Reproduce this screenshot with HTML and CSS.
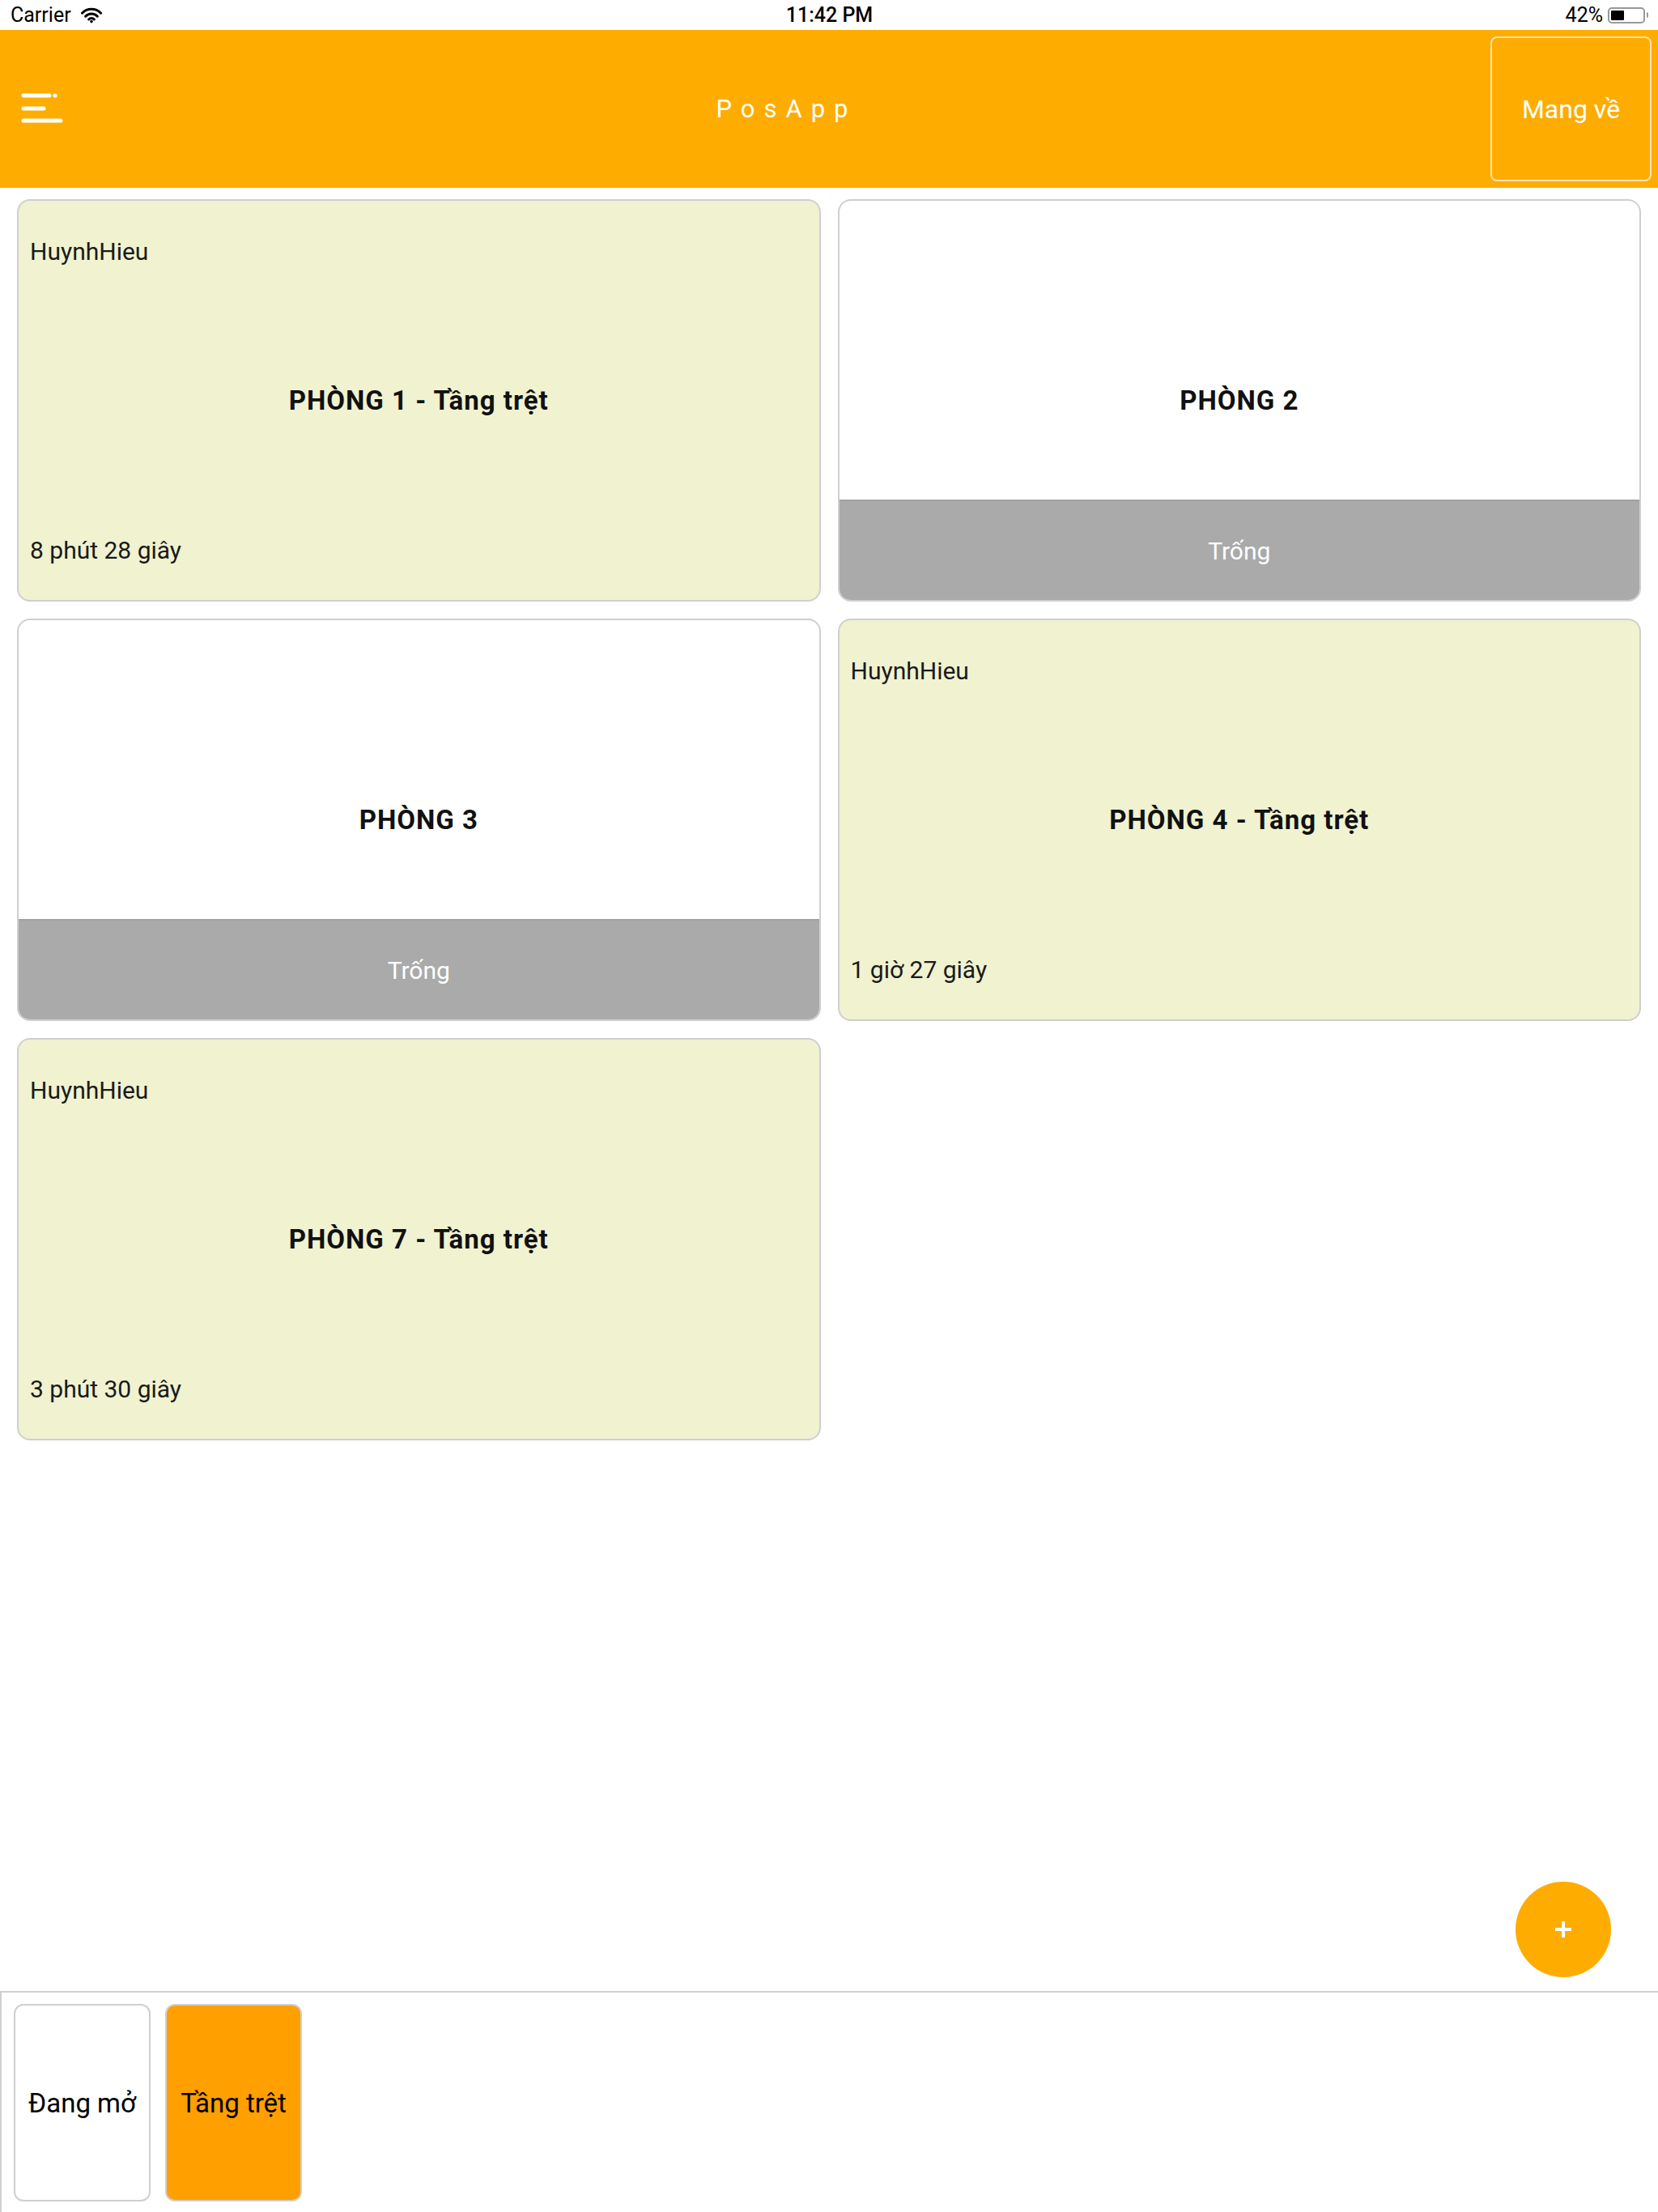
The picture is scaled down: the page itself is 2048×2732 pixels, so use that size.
FILE: index.html
```html
<!DOCTYPE html>
<html lang="vi">

<head>
    <meta charset="UTF-8">
    <meta name="viewport" content="width=device-width, initial-scale=1.0">
    <title>PosApp</title>
    <link rel="stylesheet" href="styles.css">
</head>

<body>

    <!-- Status Bar -->
    <div class="status-bar">
        <div class="status-left">
            <span>Carrier</span>
            <svg class="wifi" viewBox="0 0 26 20" width="26" height="20">
                <path d="M1.5 7.2 A16 16 0 0 1 24.5 7.2" fill="none" stroke="#000" stroke-width="3" stroke-linecap="round" />
                <path d="M5.6 11.2 A10.2 10.2 0 0 1 20.4 11.2" fill="none" stroke="#000" stroke-width="3" stroke-linecap="round" />
                <path d="M9.6 15 A4.6 4.6 0 0 1 16.4 15" fill="none" stroke="#000" stroke-width="3" stroke-linecap="round" />
                <circle cx="13" cy="17.6" r="1.8" fill="#000" />
            </svg>
        </div>
        <div class="status-time">11:42 PM</div>
        <div class="status-right">
            <span>42%</span>
            <div class="battery">
                <div class="battery-level"></div>
            </div>
            <div class="battery-nub"></div>
        </div>
    </div>

    <!-- Header -->
    <header>
        <div class="menu-icon">
            <svg viewBox="0 0 52 40" width="52" height="40">
                <line x1="3" y1="6" x2="35" y2="6" stroke="#fff" stroke-width="5" stroke-linecap="round" />
                <circle cx="42" cy="6" r="2.6" fill="#fff" />
                <line x1="3" y1="22" x2="28" y2="22" stroke="#fff" stroke-width="5" stroke-linecap="round" />
                <line x1="3" y1="37" x2="49" y2="37" stroke="#fff" stroke-width="5" stroke-linecap="round" />
            </svg>
        </div>
        <h1>PosApp</h1>
        <button class="takeaway-btn">Mang về</button>
    </header>

    <!-- Room Grid -->
    <main class="room-grid">
        <div class="room busy">
            <div class="room-top">HuynhHieu</div>
            <div class="room-name">PHÒNG 1 - Tầng trệt</div>
            <div class="room-bottom">8 phút 28 giây</div>
        </div>
        <div class="room">
            <div class="room-top"></div>
            <div class="room-name">PHÒNG 2</div>
            <div class="room-bottom empty">Trống</div>
        </div>
        <div class="room">
            <div class="room-top"></div>
            <div class="room-name">PHÒNG 3</div>
            <div class="room-bottom empty">Trống</div>
        </div>
        <div class="room busy">
            <div class="room-top">HuynhHieu</div>
            <div class="room-name">PHÒNG 4 - Tầng trệt</div>
            <div class="room-bottom">1 giờ 27 giây</div>
        </div>
        <div class="room busy">
            <div class="room-top">HuynhHieu</div>
            <div class="room-name">PHÒNG 7 - Tầng trệt</div>
            <div class="room-bottom">3 phút 30 giây</div>
        </div>
    </main>

    <!-- Add Button -->
    <button class="fab">
        <svg viewBox="0 0 24 24" width="24" height="24">
            <line x1="12" y1="2" x2="12" y2="22" stroke="#fff" stroke-width="4" />
            <line x1="2" y1="12" x2="22" y2="12" stroke="#fff" stroke-width="4" />
        </svg>
    </button>

    <!-- Floor Tabs -->
    <nav class="floor-tabs">
        <a href="javascript:void(0)" class="tab">Đang mở</a>
        <a href="javascript:void(0)" class="tab active">Tầng trệt</a>
    </nav>

</body>

</html>
```

FILE: styles.css
```css
/* Basic layout */
body {
    font-family: Roboto, "Liberation Sans", sans-serif;
    background-color: #fff;
    margin: 0;
    padding: 0;
    display: flex;
    flex-direction: column;
    height: 100vh;
    position: relative;
}

/* Status Bar */
.status-bar {
    height: 37px;
    display: flex;
    align-items: center;
    justify-content: space-between;
    padding: 0 12px 0 13px;
    font-size: 25px;
    color: #000;
    flex-shrink: 0;
}

.status-left {
    display: flex;
    align-items: center;
    gap: 12px;
    width: 300px;
}

.status-time {
    font-weight: 500;
    font-size: 25px;
}

.status-right {
    display: flex;
    align-items: center;
    justify-content: flex-end;
    width: 300px;
}

.status-right span {
    margin-right: 6px;
}

.battery {
    width: 46px;
    height: 20px;
    box-sizing: border-box;
    border: 2px solid #999;
    border-radius: 5px;
    padding: 2px;
}

.battery-level {
    width: 42%;
    height: 100%;
    background-color: #000;
    border-radius: 1px;
}

.battery-nub {
    width: 2px;
    height: 7px;
    background-color: #999;
    margin-left: 2px;
    border-radius: 0 2px 2px 0;
}

/* Header */
header {
    background-color: #ffac00;
    height: 195px;
    display: flex;
    align-items: center;
    padding: 0 8px 0 26px;
    flex-shrink: 0;
}

.menu-icon {
    width: 76px;
    display: flex;
    align-items: center;
}

.menu-icon svg {
    display: block;
    margin-top: -6px;
}

header h1 {
    flex: 1;
    margin: 0;
    text-align: center;
    color: #fff;
    font-size: 31px;
    font-weight: 400;
    letter-spacing: 11px;
}

.takeaway-btn {
    width: 199px;
    height: 179px;
    background: transparent;
    border: 2px solid #ffe2b0;
    border-radius: 8px;
    color: #fff;
    font-family: Roboto, "Liberation Sans", sans-serif;
    font-size: 32px;
    cursor: pointer;
}

/* Room Grid */
.room-grid {
    flex: 1;
    display: grid;
    grid-template-columns: 1fr 1fr;
    grid-auto-rows: 497px;
    align-content: start;
    gap: 21px;
    padding: 14px 21px 0 21px;
}

.room {
    display: grid;
    grid-template-rows: 124px 1fr 124px;
    border: 2px solid #cfcfcf;
    border-radius: 16px;
    background-color: #fff;
    overflow: hidden;
    box-sizing: border-box;
}

.room.busy {
    background-color: #f0f2d0;
}

.room-top,
.room-bottom {
    display: flex;
    align-items: center;
    padding: 0 14px;
    font-size: 30px;
    color: #1a1a1a;
}

.room-name {
    display: flex;
    align-items: center;
    justify-content: center;
    font-size: 33px;
    font-weight: 700;
    letter-spacing: 1px;
    color: #111;
}

.room-bottom.empty {
    justify-content: center;
    background-color: #aaa;
    color: #fff;
    font-size: 30px;
    border-top: 2px solid #a2a2a2;
}

/* Floating add button */
.fab {
    position: absolute;
    right: 58px;
    bottom: 290px;
    width: 118px;
    height: 118px;
    border-radius: 50%;
    border: none;
    background-color: #ffac00;
    display: flex;
    align-items: center;
    justify-content: center;
    cursor: pointer;
}

/* Floor Tabs */
.floor-tabs {
    height: 273px;
    box-sizing: border-box;
    border-top: 2px solid #d0d0d0;
    border-left: 2px solid #d0d0d0;
    display: flex;
    gap: 18px;
    padding: 14px 15px;
    flex-shrink: 0;
}

.tab {
    width: 169px;
    height: 244px;
    box-sizing: border-box;
    border: 2px solid #cfcfcf;
    border-radius: 12px;
    display: flex;
    align-items: center;
    justify-content: center;
    color: #000;
    text-decoration: none;
    font-size: 33px;
}

.tab.active {
    background-color: #ff9f00;
}
```
